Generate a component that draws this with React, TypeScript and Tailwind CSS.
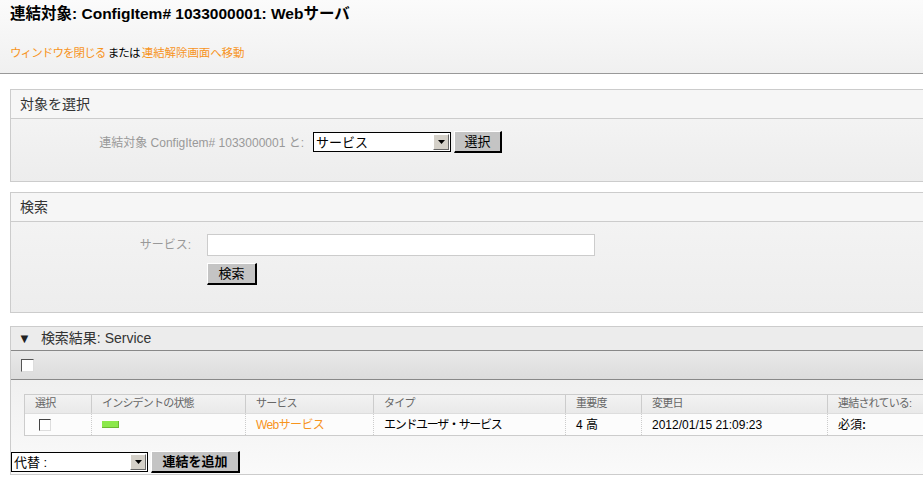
import React from 'react'

const jp = { fontFamily: '"Liberation Sans", "Noto Sans CJK JP", sans-serif' }

function FakeSelect({ value, width }: { value: string; width: string }) {
    return (
        <div className={`flex h-[20px] ${width} items-center border border-black bg-white`}>
            <span className="flex-1 pl-[2px] text-[13px] leading-none text-black">{value}</span>
            <span className="mr-[1px] flex h-[16px] w-[16px] items-center justify-center border border-t-white border-l-white border-b-[#666] border-r-[#666] bg-[#d4d0c8]">
                <svg width="7" height="4" viewBox="0 0 7 4"><path d="M0 0h7L3.5 4z" fill="#000" /></svg>
            </span>
        </div>
    )
}

function Btn({ label, className = '' }: { label: string; className?: string }) {
    return (
        <button className={`h-[22px] border border-t-white border-l-white border-b-2 border-r-2 border-b-black border-r-black bg-[#c4c4c4] text-[13px] leading-none text-black ${className}`}>
            {label}
        </button>
    )
}

const cols = [
    { w: 'w-[66px]', head: '選択' },
    { w: 'w-[154px]', head: 'インシデントの状態' },
    { w: 'w-[128px]', head: 'サービス' },
    { w: 'w-[192px]', head: 'タイプ' },
    { w: 'w-[76px]', head: '重要度' },
    { w: 'w-[186px]', head: '変更日' },
    { w: 'w-[120px]', head: '連結されている:' },
]

export default function App() {
    return (
        <div className="h-[497px] w-[923px] overflow-hidden bg-white" style={jp}>
            {/* header */}
            <div className="h-[74px] border-b border-[#999] bg-gradient-to-b from-[#fbfbfb] to-[#f0f0f0] px-[10px] pt-[5px]">
                <h1 className="text-[15.5px] font-bold leading-[18px] text-black">連結対象: ConfigItem# 1033000001: Webサーバ</h1>
                <p className="mt-[23px] text-[11.5px] leading-[14px] tracking-[-0.9px] text-black">
                    <a className="text-[#f7941d]">ウィンドウを閉じる</a> または <a className="tracking-[-0.1px] text-[#f7941d]">連結解除画面へ移動</a>
                </p>
            </div>

            {/* 対象を選択 */}
            <div className="ml-[10px] mt-[15px] border border-r-0 border-[#ccc]">
                <div className="flex h-[29px] items-center border-b border-[#ccc] bg-[#f6f6f6] pl-[9px] text-[14px] text-[#333]">対象を選択</div>
                <div className="flex h-[62px] items-start bg-gradient-to-b from-[#f3f3f3] to-[#ededed] pt-[12px]">
                    <span className="w-[293px] pt-[3px] text-right text-[12px] text-[#999]">連結対象 ConfigItem# 1033000001 と:</span>
                    <div className="ml-[9px] flex items-center gap-[3px]">
                        <FakeSelect value="サービス" width="w-[138px]" />
                        <Btn label="選択" className="w-[48px]" />
                    </div>
                </div>
            </div>

            {/* 検索 */}
            <div className="ml-[10px] mt-[10px] border border-r-0 border-[#ccc]">
                <div className="flex h-[29px] items-center border-b border-[#ccc] bg-[#f6f6f6] pl-[9px] text-[14px] text-[#333]">検索</div>
                <div className="flex h-[90px] bg-gradient-to-b from-[#f3f3f3] to-[#ededed] pt-[12px]">
                    <span className="w-[180px] pt-[2px] text-right text-[12px] text-[#999]">サービス:</span>
                    <div className="ml-[16px] flex flex-col gap-[7px]">
                        <div className="h-[22px] w-[388px] border border-[#ccc] bg-white" />
                        <Btn label="検索" className="w-[50px]" />
                    </div>
                </div>
            </div>

            {/* 検索結果 */}
            <div className="ml-[10px] mt-[13px] border border-r-0 border-[#ccc]">
                <div className="flex h-[24px] items-center border-b border-[#888] bg-[#ececec] pl-[7px] text-[14px] text-[#333]">
                    <span className="mr-[10px] text-[13px] text-[#222]">▼</span>検索結果: Service
                </div>
                <div className="flex h-[29px] items-center border-b border-[#888] bg-gradient-to-b from-[#e9e9e9] to-[#dcdcdc] pl-[10px]">
                    <span className="h-[13px] w-[13px] border border-b-[#ddd] border-r-[#ddd] border-t-[#555] border-l-[#555] bg-white" />
                </div>
                <div className="bg-gradient-to-b from-[#f0f0f0] to-[#fafafa] pt-[14px]">
                    <div className="ml-[13px] border-t border-l border-b border-[#ccc]">
                        <div className="flex h-[19px] border-b border-[#ddd] bg-gradient-to-b from-[#f2f2f2] to-[#e9e9e9]">
                            {cols.map((c, i) => (
                                <div key={i} className={`${c.w} shrink-0 ${i > 0 ? 'border-l border-[#ccc]' : ''} pl-[10px] pt-[3px] text-[11px] leading-none tracking-[-0.8px] text-[#666]`}>{c.head}</div>
                            ))}
                        </div>
                        <div className="flex h-[21px] items-center bg-[#fcfcfc] text-[12px] text-black">
                            <div className="flex h-full w-[66px] shrink-0 items-center pl-[14px]">
                                <span className="h-[12px] w-[12px] border border-b-[#ddd] border-r-[#ddd] border-t-[#444] border-l-[#444] bg-white" />
                            </div>
                            <div className="flex h-full w-[154px] shrink-0 items-center border-l border-dotted border-[#ccc] pl-[10px]">
                                <span className="h-[7px] w-[17px] border-b border-r border-[#6ab830] bg-[#8be84a]" />
                            </div>
                            <div className="flex h-full w-[128px] shrink-0 items-center border-l border-dotted border-[#ccc] pl-[10px] tracking-[-0.6px] text-[#f7941d]">Webサービス</div>
                            <div className="flex h-full w-[192px] shrink-0 items-center border-l border-dotted border-[#ccc] pl-[10px] tracking-[-1.3px]">エンドユーザ・サービス</div>
                            <div className="flex h-full w-[76px] shrink-0 items-center border-l border-dotted border-[#ccc] pl-[10px]">4 高</div>
                            <div className="flex h-full w-[186px] shrink-0 items-center border-l border-dotted border-[#ccc] pl-[10px]">2012/01/15 21:09:23</div>
                            <div className="flex h-full w-[120px] shrink-0 items-center border-l border-dotted border-[#ccc] pl-[10px]">必須<b>:</b></div>
                        </div>
                    </div>
                    <div className="mt-[15px] flex items-center gap-[3px] pb-[1px]">
                        <FakeSelect value="代替 :" width="w-[137px]" />
                        <Btn label="連結を追加" className="w-[89px] font-bold" />
                    </div>
                </div>
            </div>
        </div>
    )
}
